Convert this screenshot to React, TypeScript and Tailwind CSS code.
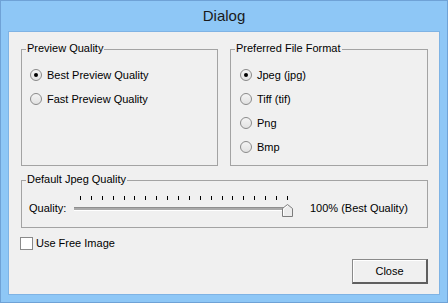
import React from 'react';

const FONT = { fontFamily: '"Liberation Sans", Arial, sans-serif' };

function GroupBox({ title, className, children }: { title: string; className: string; children: React.ReactNode }) {
  return (
    <div className={`relative border border-[#a3a3a3] ${className}`}>
      <span className="absolute left-[4px] -top-[8px] px-[1px] bg-[#f0f0f0] leading-[13px]">{title}</span>
      {children}
    </div>
  );
}

function Radio({ label, checked }: { label: string; checked?: boolean }) {
  return (
    <div className="h-[24px] flex items-center gap-[5px]">
      <span className="w-[12px] h-[12px] rounded-full border border-[#8a8a8a] bg-gradient-to-b from-[#f4f4f4] to-[#e2e2e2] flex items-center justify-center">
        {checked && <span className="w-[4px] h-[4px] rounded-full bg-black" />}
      </span>
      <span className="leading-[13px]">{label}</span>
    </div>
  );
}

function Slider() {
  return (
    <div className="relative w-[218px] h-[24px] flex flex-col">
      {/* tick marks */}
      <div className="h-[4px] pl-[6px] pr-[4px] flex justify-between">
        {Array.from({ length: 20 }).map((_, i) => (
          <span key={i} className="w-px h-[4px] bg-black" />
        ))}
      </div>
      {/* track */}
      <div className="mt-[7px] w-[212px] h-[4px] flex flex-col">
        <div className="h-px bg-[#8e8e8e]" />
        <div className="h-[2px] bg-[#a9a9a9]" />
        <div className="h-px bg-white" />
      </div>
      {/* thumb */}
      <svg className="absolute left-[208px] top-[8px]" width="11" height="13" viewBox="0 0 11 13">
        <polygon points="0.5,12.5 0.5,4.5 5.5,0.5 10.5,4.5 10.5,12.5" fill="#ececec" stroke="#7c7c7c" />
        <polyline points="1.5,11.5 1.5,5 5.5,1.8" fill="none" stroke="#ffffff" />
      </svg>
    </div>
  );
}

export default function App() {
  return (
    <div
      className="w-[448px] h-[303px] bg-[#8ec7f6] border border-[#6fa2d6] flex flex-col text-[11px] text-black"
      style={FONT}
    >
      {/* Title bar */}
      <div className="h-[30px] flex items-center justify-center text-[15px] text-[#1a1a1a]">Dialog</div>

      {/* Client area */}
      <div className="mx-[7px] mb-[7px] flex-1 bg-[#f0f0f0] border border-[#7fb3e4] pl-[12px] pt-[17px] flex flex-col">
        <div className="flex gap-[12px]">
          <GroupBox title="Preview Quality" className="w-[197px] h-[117px] pl-[8px] pt-[13px]">
            <Radio label="Best Preview Quality" checked />
            <Radio label="Fast Preview Quality" />
          </GroupBox>
          <GroupBox title="Preferred File Format" className="w-[198px] h-[117px] pl-[9px] pt-[13px]">
            <Radio label="Jpeg (jpg)" checked />
            <Radio label="Tiff (tif)" />
            <Radio label="Png" />
            <Radio label="Bmp" />
          </GroupBox>
        </div>

        <GroupBox title="Default Jpeg Quality" className="mt-[14px] w-[407px] h-[48px] pt-[15px] pl-[7px] flex items-start">
          <span className="w-[45px] mt-[6px] leading-[13px]">Quality:</span>
          <Slider />
          <span className="ml-[18px] mt-[6px] leading-[13px]">100% (Best Quality)</span>
        </GroupBox>

        <div className="mt-[9px] -ml-[1px] flex items-center gap-[3px]">
          <span className="w-[13px] h-[13px] border border-[#8a8a8a] bg-white" />
          <span className="leading-[13px]">Use Free Image</span>
        </div>

        <div className="mt-[9px] pr-[11px] flex justify-end">
          <button className="w-[76px] h-[25px] border border-[#8a8a8a] border-r-2 border-b-2 border-r-[#5f5f5f] border-b-[#5f5f5f] bg-[#f0f0f0] shadow-[inset_1px_1px_0_#ffffff] leading-[13px]">
            Close
          </button>
        </div>
      </div>
    </div>
  );
}
